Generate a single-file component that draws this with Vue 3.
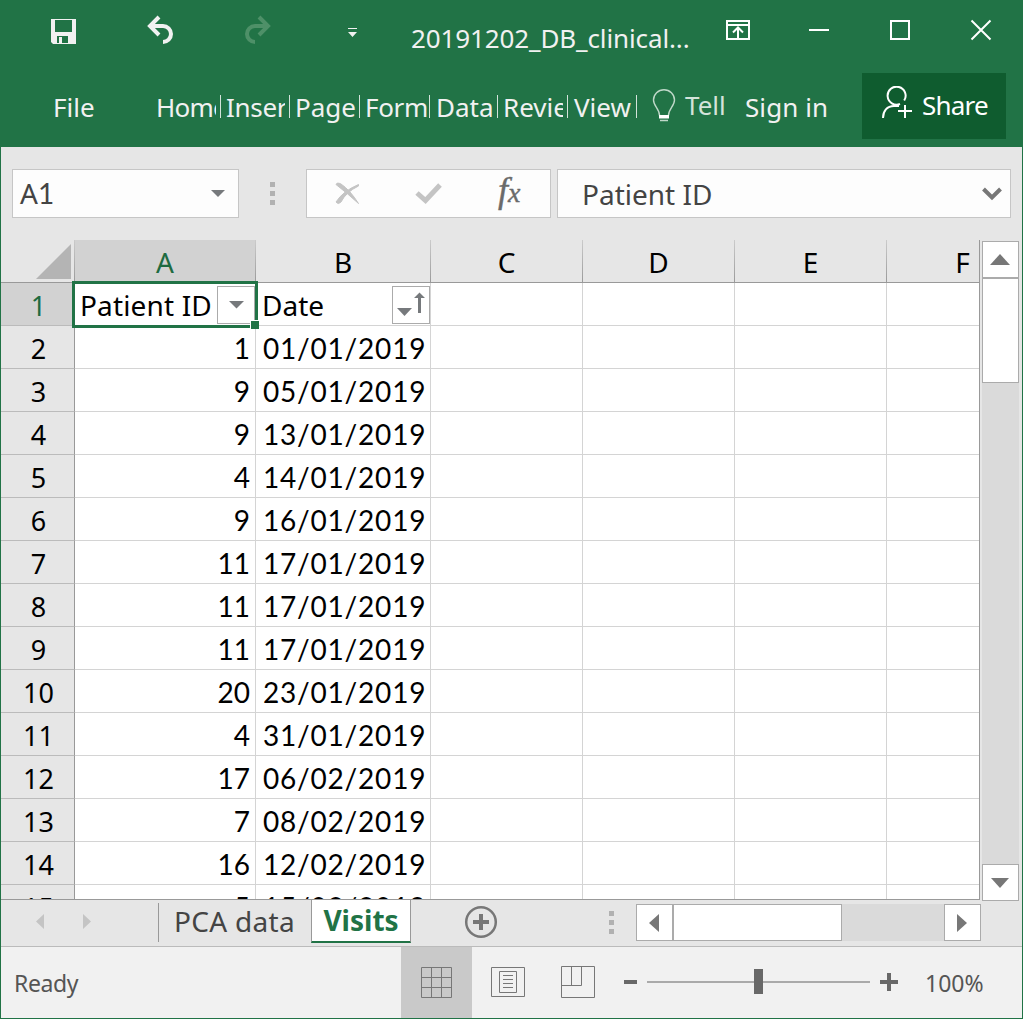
<script setup>
const names = ['Home', 'Insert', 'Page', 'Form', 'Data', 'Review', 'View']
const seps = [220, 289, 359, 429, 497, 567, 636]
const starts = [154, 224, 293, 363, 434, 501, 572]
const ends = [216, 285, 358, 428, 495, 563, 634]
const tabBoxes = names.map((text, i) => ({
  text,
  width: ends[i] - starts[i],
  before: i ? starts[i] - seps[i - 1] - 1 : 0,
  after: seps[i] - ends[i],
}))
const cols = ['A', 'B', 'C', 'D', 'E', 'F']
const rows = [
  ['1', '01/01/2019'], ['9', '05/01/2019'], ['9', '13/01/2019'], ['4', '14/01/2019'], ['9', '16/01/2019'],
  ['11', '17/01/2019'], ['11', '17/01/2019'], ['11', '17/01/2019'], ['20', '23/01/2019'], ['4', '31/01/2019'],
  ['17', '06/02/2019'], ['7', '08/02/2019'], ['16', '12/02/2019'], ['5', '15/02/2019'],
]
</script>

<template>
  <div class="app">
    <header>
      <div class="titlebar">
        <svg class="qat" width="400" height="73" viewBox="0 0 400 73">
          <path fill="#f1f1f1" fill-rule="evenodd" d="M51 19H76V44H53L51 42ZM55 20V32H72V20ZM57 36V43H59V37H62V43H68V36Z" />
          <g fill="none" stroke="#f1f1f1" stroke-width="4">
            <path d="M150 26H163A8 8 0 0 1 163 42" /><path d="M159 17L150 26L159 35" />
          </g>
          <g fill="none" stroke="#4e9068" stroke-width="4">
            <path d="M268 26H255A8 8 0 0 0 255 42" /><path d="M259 17L268 26L259 35" />
          </g>
          <path fill="#f1f1f1" d="M348 28H357V29H348ZM348 32H357L352.500 37Z" />
        </svg>
        <span class="title">20191202_DB_clinical...</span>
        <svg class="winbtns" width="323" height="73" viewBox="700 0 323 73" fill="none" stroke="#fff" stroke-width="2">
          <path d="M727 21H749V39H727ZM727 25H749M738 38V28M733 32.500L738 27.500L743 32.500" />
          <path d="M809 30H829" /><path d="M891 21H909V39H891Z" /><path d="M971.500 20.500L990.500 39.500M990.500 20.500L971.500 39.500" />
        </svg>
      </div>
      <div class="ribbon">
        <span class="file">File</span>
        <template v-for="(tab, i) in tabBoxes" :key="i">
          <span class="tab" :class="'t' + i" :style="{ width: tab.width + 'px', marginLeft: tab.before + 'px', marginRight: tab.after + 'px' }">{{ tab.text }}</span>
          <i class="sep"></i>
        </template>
        <svg class="bulb" width="24" height="34" viewBox="0 0 24 34" fill="none">
          <path d="M7.500 26.500C7.500 20 1.500 17 1.500 11A10.500 10.300 0 0 1 22.500 11C22.500 17 16.500 20 16.500 26.500" stroke="#bfd8c9" stroke-width="1.400" />
          <path d="M7 26H17V29.500H7Z" fill="#fff" /><path d="M8 31.500H16" stroke="#bfd8c9" stroke-width="1.500" />
        </svg>
        <span class="tell">Tell</span>
        <span class="signin">Sign in</span>
        <div class="share">
          <svg width="32" height="34" viewBox="0 0 32 34" fill="none" stroke="#fff" stroke-width="2">
            <path d="M19 18A9 9 0 1 1 23.200 14.500" /><path d="M2 32C2 25 6 20 13 20H18" /><path d="M24 19V32M17 25H31" />
          </svg>
          <span>Share</span>
        </div>
      </div>
    </header>

    <div class="formula">
      <div class="box name"><span>A<span class="digit">1</span></span><svg width="14" height="8"><path d="M0 0H14L7 7Z" fill="#76797c" /></svg></div>
      <div class="dots"><i></i><i></i><i></i></div>
      <div class="box fns">
        <svg width="243" height="47" viewBox="307 170 243 47">
          <path d="M336 184.500Q337 182 341 184Q350 190 358.500 203.500Q347 193 336 184.500ZM358.500 184.500V186Q346 192 341 202Q338 205 336 202Q343 191 358.500 184.500Z" fill="#c4c4c4" stroke="#c4c4c4" stroke-width="1" />
          <path d="M417 193L425.500 200.500L440 185" fill="none" stroke="#c4c4c4" stroke-width="5" />
          <text x="498" y="202" class="fx">f<tspan x="508" y="202" font-size="28">x</tspan></text>
        </svg>
      </div>
      <div class="box value"><span>Patient ID</span><svg width="20" height="14" viewBox="0 0 20 14"><path d="M1.500 2L10 10.500L18.500 2" fill="none" stroke="#777" stroke-width="4" /></svg></div>
    </div>

    <div class="main">
      <div class="sheet">
        <div class="row heads">
          <div class="corner"><svg width="35" height="35"><path d="M35 0V35H0Z" fill="#b4b4b4" /></svg></div>
          <div v-for="(c, i) in cols" :key="c" :class="['head', 'c' + i]">{{ c }}</div>
        </div>
        <div class="row">
          <div class="num on">1</div>
          <div class="cell c0"><span class="hd pid">Patient ID</span>
            <div class="filter fa"><svg width="15" height="8"><path d="M0 0H15L7.500 7.500Z" fill="#76797c" /></svg></div>
            <div class="selection"></div>
            <i class="handle"></i>
          </div>
          <div class="cell c1"><span class="hd">Date</span>
            <div class="filter fb"><svg width="36" height="36" viewBox="393 287 36 36"><path d="M397 308H412L404.500 316ZM414 298L419.500 292.500L425 298H421V313H418V298Z" fill="#76797c" /></svg></div>
          </div>
          <div v-for="i in [2, 3, 4, 5]" :key="i" :class="['cell', 'c' + i]"></div>
        </div>
        <div v-for="(r, k) in rows" :key="k" class="row">
          <div class="num">{{ k + 2 }}</div>
          <div class="cell c0 id">{{ r[0] }}</div>
          <div class="cell c1 date">{{ r[1] }}</div>
          <div v-for="i in [2, 3, 4, 5]" :key="i" :class="['cell', 'c' + i]"></div>
        </div>
      </div>
      <div class="vbar">
        <div class="btn"><svg width="20" height="11"><path d="M10 0L20 11H0Z" fill="#777" /></svg></div>
        <div class="thumb"></div>
        <div class="btn down"><svg width="18" height="10"><path d="M0 0H18L9 10Z" fill="#777" /></svg></div>
      </div>
    </div>

    <div class="tabs">
      <svg class="nav" width="157" height="46" viewBox="1 900 157 46" fill="#c4c4c4"><path d="M44 914V929L36 921.500ZM83 914V929L91 921.500Z" /></svg>
      <span class="pca">PCA data</span>
      <span class="visits">Visits</span>
      <svg class="add" width="34" height="34" viewBox="0 0 34 34" fill="none" stroke="#777"><circle cx="17" cy="17" r="14.800" stroke-width="2.500" /><path d="M9 17H25M17 9V25" stroke-width="4" /></svg>
      <div class="dots d2"><i></i><i></i><i></i></div>
      <div class="hbar">
        <div class="btn left"><svg width="10" height="18"><path d="M10 0V18L0 9Z" fill="#777" /></svg></div>
        <div class="hthumb"></div>
        <div class="btn right"><svg width="10" height="18"><path d="M0 0V18L10 9Z" fill="#777" /></svg></div>
      </div>
    </div>

    <footer>
      <span class="ready">Ready</span>
      <svg class="views" width="500" height="71" viewBox="401 947 500 71" fill="none" stroke="#777" stroke-width="1">
        <path d="M401 947H472V1018H401Z" fill="#c9c9c9" stroke="none" />
        <path d="M421.500 967.500H451.500V997.500H421.500ZM421.500 977.500H451.500M421.500 987.500H451.500M431.500 967.500V997.500M441.500 967.500V997.500" />
        <path d="M491.500 967.500H524.500V996.500H491.500ZM499.500 971.500H516.500V992.500H499.500ZM503 975.500H513M503 979.500H513M503 983.500H513M503 987.500H513" />
        <path d="M561.500 966.500H594.500V997.500H561.500ZM571.500 966.500V985.500M561.500 985.500H581.500V966.500" />
        <path d="M647 982H870" stroke="#aaa" stroke-width="2" />
        <path d="M624 982H637M880 982H898M889 973V991" stroke="#686868" stroke-width="4" />
        <path d="M754 969H763V994H754Z" fill="#686868" stroke="none" />
      </svg>
      <span class="pct">100%</span>
    </footer>
  </div>
</template>

<style>
body { margin: 0; overflow: hidden; }
</style>
<style scoped>
* { box-sizing: border-box; }
svg { display: block; flex: none; }
.app { width: 1023px; height: 1019px; background: #e6e6e6; border: 1px solid #217346; border-top: 0; font-family: "Noto Sans", "Open Sans", sans-serif; display: flex; flex-direction: column; overflow: hidden; white-space: nowrap; }
header { height: 147px; margin: 0 -1px; background: #217346; color: #f1f1f1; flex: none; }
.titlebar { height: 73px; display: flex; }
.title { width: 300px; padding-left: 11px; font-size: 26px; line-height: 36px; margin-top: 20px; letter-spacing: -.12px; }
.ribbon { height: 66px; display: flex; font-size: 26px; line-height: 36px; }
.file { width: 154px; padding-left: 53px; margin-top: 16px; }
.tab { overflow: hidden; margin-top: 16px; height: 40px; flex: none; padding-left: 2px; }
.t0 { letter-spacing: -.8px; }
.t1 { letter-spacing: -.3px; }
.t3 { letter-spacing: -.3px; }
.sep { width: 1px; height: 23px; margin-top: 22px; background: #d3e3da; flex: none; }
.bulb { margin: 16px 0 0 15px; }
.tell { width: 60px; margin: 14px 0 0 9px; color: #d3e3da; }
.signin { width: 117px; margin-top: 16px; letter-spacing: .1px; }
.share { width: 144px; height: 66px; background: #0f5c2f; color: #fff; display: flex; padding: 13px 0 0 19px; margin-left: auto; margin-right: 17px; }
.share span { margin: 1px 0 0 9px; letter-spacing: -.8px; }
.formula { height: 93px; padding: 22px 0 0 11px; display: flex; flex: none; }
.box { height: 49px; border: 1px solid #c6c6c6; background: #fdfdfd; display: flex; color: #444; flex: none; font-size: 28px; line-height: 47px; }
.name { width: 227px; padding: 0 13px 0 7px; align-items: center; justify-content: space-between; }
.digit { font-family: Lato, sans-serif; }
.dots { display: flex; flex-direction: column; gap: 4px; margin: 13px 0 0 31px; width: 36px; }
.dots i { width: 5px; height: 5px; background: #b1b1b1; }
.fns { width: 245px; }
.fx { font: italic 36px "Liberation Serif", serif; fill: #6a6a6a; stroke: #6a6a6a; stroke-width: .4px; }
.value { width: 454px; margin-left: 6px; padding: 0 8px 0 24px; align-items: center; justify-content: space-between; font-size: 28px; }
.value span { margin-top: 1px; }
.main { height: 660px; display: flex; flex: none; }
.sheet { width: 979px; height: 660px; overflow: hidden; border-right: 1px solid #999; border-bottom: 1px solid #999; background: #fff; color: #000; font-size: 28px; }
.row { height: 43px; display: flex; }
.heads { background: #e6e6e6; border-bottom: 1px solid #999; line-height: 45px; text-align: center; }
.corner { width: 73px; flex: none; padding: 4px 0 0 35px; }
.head { border-right: 1px solid; border-image: linear-gradient(#ccc, #999) 1; flex: none; }
.head.c0 { background: #d2d2d2; color: #1e6b41; border-left: 1px solid; }
.c0 { width: 182px; }
.c1 { width: 175px; }
.c2, .c3, .c4 { width: 152px; }
.c5 { width: 152px; }
.num { width: 74px; flex: none; background: #e6e6e6; border-right: 1px solid #999; border-bottom: 1px solid #bbb; text-align: center; line-height: 45px; font-size: 27px; padding-left: 2px; }
.on { background: #d2d2d2; color: #1e6b41; }
.cell { position: relative; flex: none; border-right: 1px solid #d4d4d4; border-bottom: 1px solid #d4d4d4; line-height: 44px; }
.cell.c0 { width: 181px; }
.hd { padding-left: 6px; }
.pid { padding-left: 5px; letter-spacing: .15px; }
.id { text-align: right; padding-right: 5px; font-family: Lato, sans-serif; font-size: 28px; }
.date { padding-left: 7px; letter-spacing: .8px; font-family: Lato, sans-serif; font-size: 28px; }
.selection { position: absolute; left: -3px; top: -2px; width: 186px; height: 47px; border: 3px solid #217346; z-index: 2; }
.handle { position: absolute; width: 9px; height: 9px; left: 175px; top: 37px; border: 1px solid #fff; background: #217346; z-index: 3; border-right: 0; border-bottom: 0; }
.filter { position: absolute; height: 38px; width: 38px; top: 3px; border: 1px solid #ababab; background: #fff; }
.fa { left: 142px; display: flex; align-items: center; justify-content: center; }
.fb { left: 136px; }
.vbar { width: 37px; height: 660px; margin: 1px 0 0 2px; background: #dadada; display: flex; flex-direction: column; flex: none; }
.btn { width: 37px; height: 37px; flex: none; border: 1px solid #ababab; background: #fff; display: flex; align-items: center; justify-content: center; padding-right: 2px; }
.thumb { height: 105px; background: #fff; border: 1px solid #ababab; }
.down { margin-top: auto; }
.tabs { height: 47px; border-bottom: 1px solid #bbb; display: flex; flex: none; font-size: 28px; }
.pca { width: 153px; border-left: 1px solid #999; margin-top: 3px; height: 39px; padding-left: 15px; line-height: 36px; color: #444; letter-spacing: .3px; }
.visits { width: 100px; height: 43px; border-left: 1px solid #999; border-right: 1px solid #999; border-bottom: 2px solid #217346; background: #fff; color: #217346; font-weight: 700; text-align: center; line-height: 41px; }
.add { margin: 5px 0 0 53px; }
.d2 { margin: 11px 0 0 111px; width: 27px; }
.hbar { width: 345px; height: 37px; margin-top: 4px; display: flex; background: #dadada; }
.hthumb { width: 169px; border: 1px solid #ababab; background: #fff; }
.right { margin-left: auto; }
footer { height: 71px; background: #f1f1f1; display: flex; flex: none; color: #555; font-size: 23px; line-height: 73px; }
.ready { width: 400px; padding-left: 13px; letter-spacing: -.4px; }
.pct { margin-left: 24px; }
</style>
